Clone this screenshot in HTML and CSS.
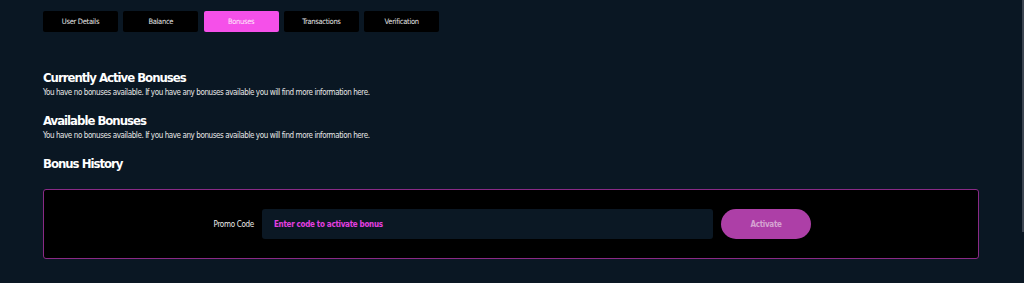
FILE: index.html
```html
<!DOCTYPE html>
<html lang="en">
<head>
<meta charset="utf-8">
<title>Bonuses</title>
<link rel="stylesheet" href="styles.css">
</head>
<body>
<div class="page">
  <nav class="tabs">
    <a class="tab">User Details</a>
    <a class="tab">Balance</a>
    <a class="tab active">Bonuses</a>
    <a class="tab">Transactions</a>
    <a class="tab">Verification</a>
  </nav>

  <section class="section first">
    <h2 class="title">Currently Active Bonuses</h2>
    <p class="info">You have no bonuses available. If you have any bonuses available you will find more information here.</p>
  </section>
  <section class="section">
    <h2 class="title">Available Bonuses</h2>
    <p class="info">You have no bonuses available. If you have any bonuses available you will find more information here.</p>
  </section>
  <section class="section">
    <h2 class="title">Bonus History</h2>
  </section>

  <div class="promo">
    <label class="promo-label">Promo Code</label>
    <div class="promo-input">Enter code to activate bonus</div>
    <button class="promo-btn">Activate</button>
  </div>
</div>
<div class="scroll-thumb"></div>
</body>
</html>
```

FILE: styles.css
```css
html, body {
  margin: 0;
  padding: 0;
  background: #0a1723;
  height: 100%;
  overflow: hidden;
}
body {
  font-family: "DejaVu Sans Condensed", "Roboto", sans-serif;
  color: #ffffff;
}
.page {
  padding: 11px 45px 0 43px;
}
.tabs {
  display: flex;
  gap: 5.3px;
}
.tab {
  width: 75px;
  height: 21px;
  background: #000000;
  border-radius: 2px;
  color: #e6e6e6;
  font-size: 7.5px;
  letter-spacing: -0.3px;
  display: flex;
  align-items: center;
  justify-content: center;
}
.tab.active {
  background: #f550e9;
  color: #ffe9fb;
}
.section {
  margin-top: 15px;
}
.section.first {
  margin-top: 38px;
}
.title {
  margin: 0;
  font-size: 13px;
  line-height: 16px;
  font-weight: bold;
  letter-spacing: -1px;
  color: #ffffff;
}
.info {
  margin: 2px 0 0;
  font-size: 8px;
  line-height: 10px;
  letter-spacing: -0.42px;
  color: #e8e8e8;
}
.promo {
  margin-top: 17px;
  height: 68px;
  border: 1px solid #8a2a86;
  border-radius: 3px;
  background: #000000;
  display: flex;
  align-items: center;
}
.promo-label {
  width: 210px;
  text-align: right;
  font-size: 8px;
  letter-spacing: -0.3px;
  color: #ececec;
}
.promo-input {
  margin-left: 8px;
  width: 439px;
  height: 30px;
  padding-left: 12px;
  background: #0b1824;
  border-radius: 3px;
  color: #e43fe0;
  font-size: 8px;
  font-weight: bold;
  letter-spacing: -0.3px;
  display: flex;
  align-items: center;
}
.promo-btn {
  margin-left: 8px;
  width: 90px;
  height: 30px;
  border: none;
  border-radius: 15px;
  background: #ad3fa7;
  color: #d6a3d2;
  font-family: inherit;
  font-size: 8px;
  font-weight: bold;
  letter-spacing: -0.3px;
}
.scroll-thumb {
  position: fixed;
  right: 0;
  top: 0;
  width: 2px;
  height: 232px;
  background: #3b4450;
}
```
